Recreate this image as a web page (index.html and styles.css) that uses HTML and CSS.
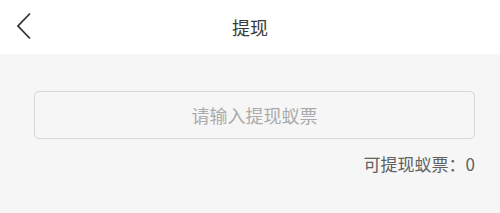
FILE: index.html
```html
<!DOCTYPE html>
<html>
<head>
<meta charset="utf-8">
<link rel="stylesheet" href="styles.css">
</head>
<body>
<div class="page">
  <header class="nav">
    <span class="back">
      <svg width="16" height="28" viewBox="0 0 16 28"><polyline points="14,1.5 2,14 14,26.5" fill="none" stroke="#333" stroke-width="1.8"/></svg>
    </span>
    <h1 class="title">提现</h1>
  </header>
  <main class="content">
    <div class="input-box">
      <input class="amount" type="text" placeholder="请输入提现蚁票">
    </div>
    <p class="balance">可提现蚁票：0</p>
  </main>
</div>
</body>
</html>
```
FILE: styles.css
```css
html, body {
  margin: 0;
  padding: 0;
  background: #f6f6f6;
  font-family: "Noto Sans CJK SC", "Noto Sans", sans-serif;
}
.page {
  width: 500px;
  height: 213px;
  display: flex;
  flex-direction: column;
}
.nav {
  position: relative;
  height: 54px;
  background: #fff;
  display: flex;
  align-items: center;
  justify-content: center;
}
.back {
  position: absolute;
  left: 16px;
  top: 12px;
  display: flex;
}
.title {
  margin: 0;
  font-size: 18px;
  font-weight: normal;
  color: #3a3a3a;
  line-height: 1;
}
.content {
  padding: 37px 25px 0 34px;
  display: flex;
  flex-direction: column;
}
.input-box {
  height: 46px;
  border: 1px solid #d6d6d6;
  border-radius: 5px;
  background: #f6f6f6;
  display: flex;
}
.amount {
  flex: 1;
  border: none;
  outline: none;
  background: transparent;
  text-align: center;
  font-family: inherit;
  font-size: 18px;
  color: #333;
  padding: 0;
}
.amount::placeholder {
  color: #ababab;
}
.balance {
  margin: 16px 0 0;
  text-align: right;
  font-size: 17px;
  color: #616161;
  line-height: 1;
}
```
